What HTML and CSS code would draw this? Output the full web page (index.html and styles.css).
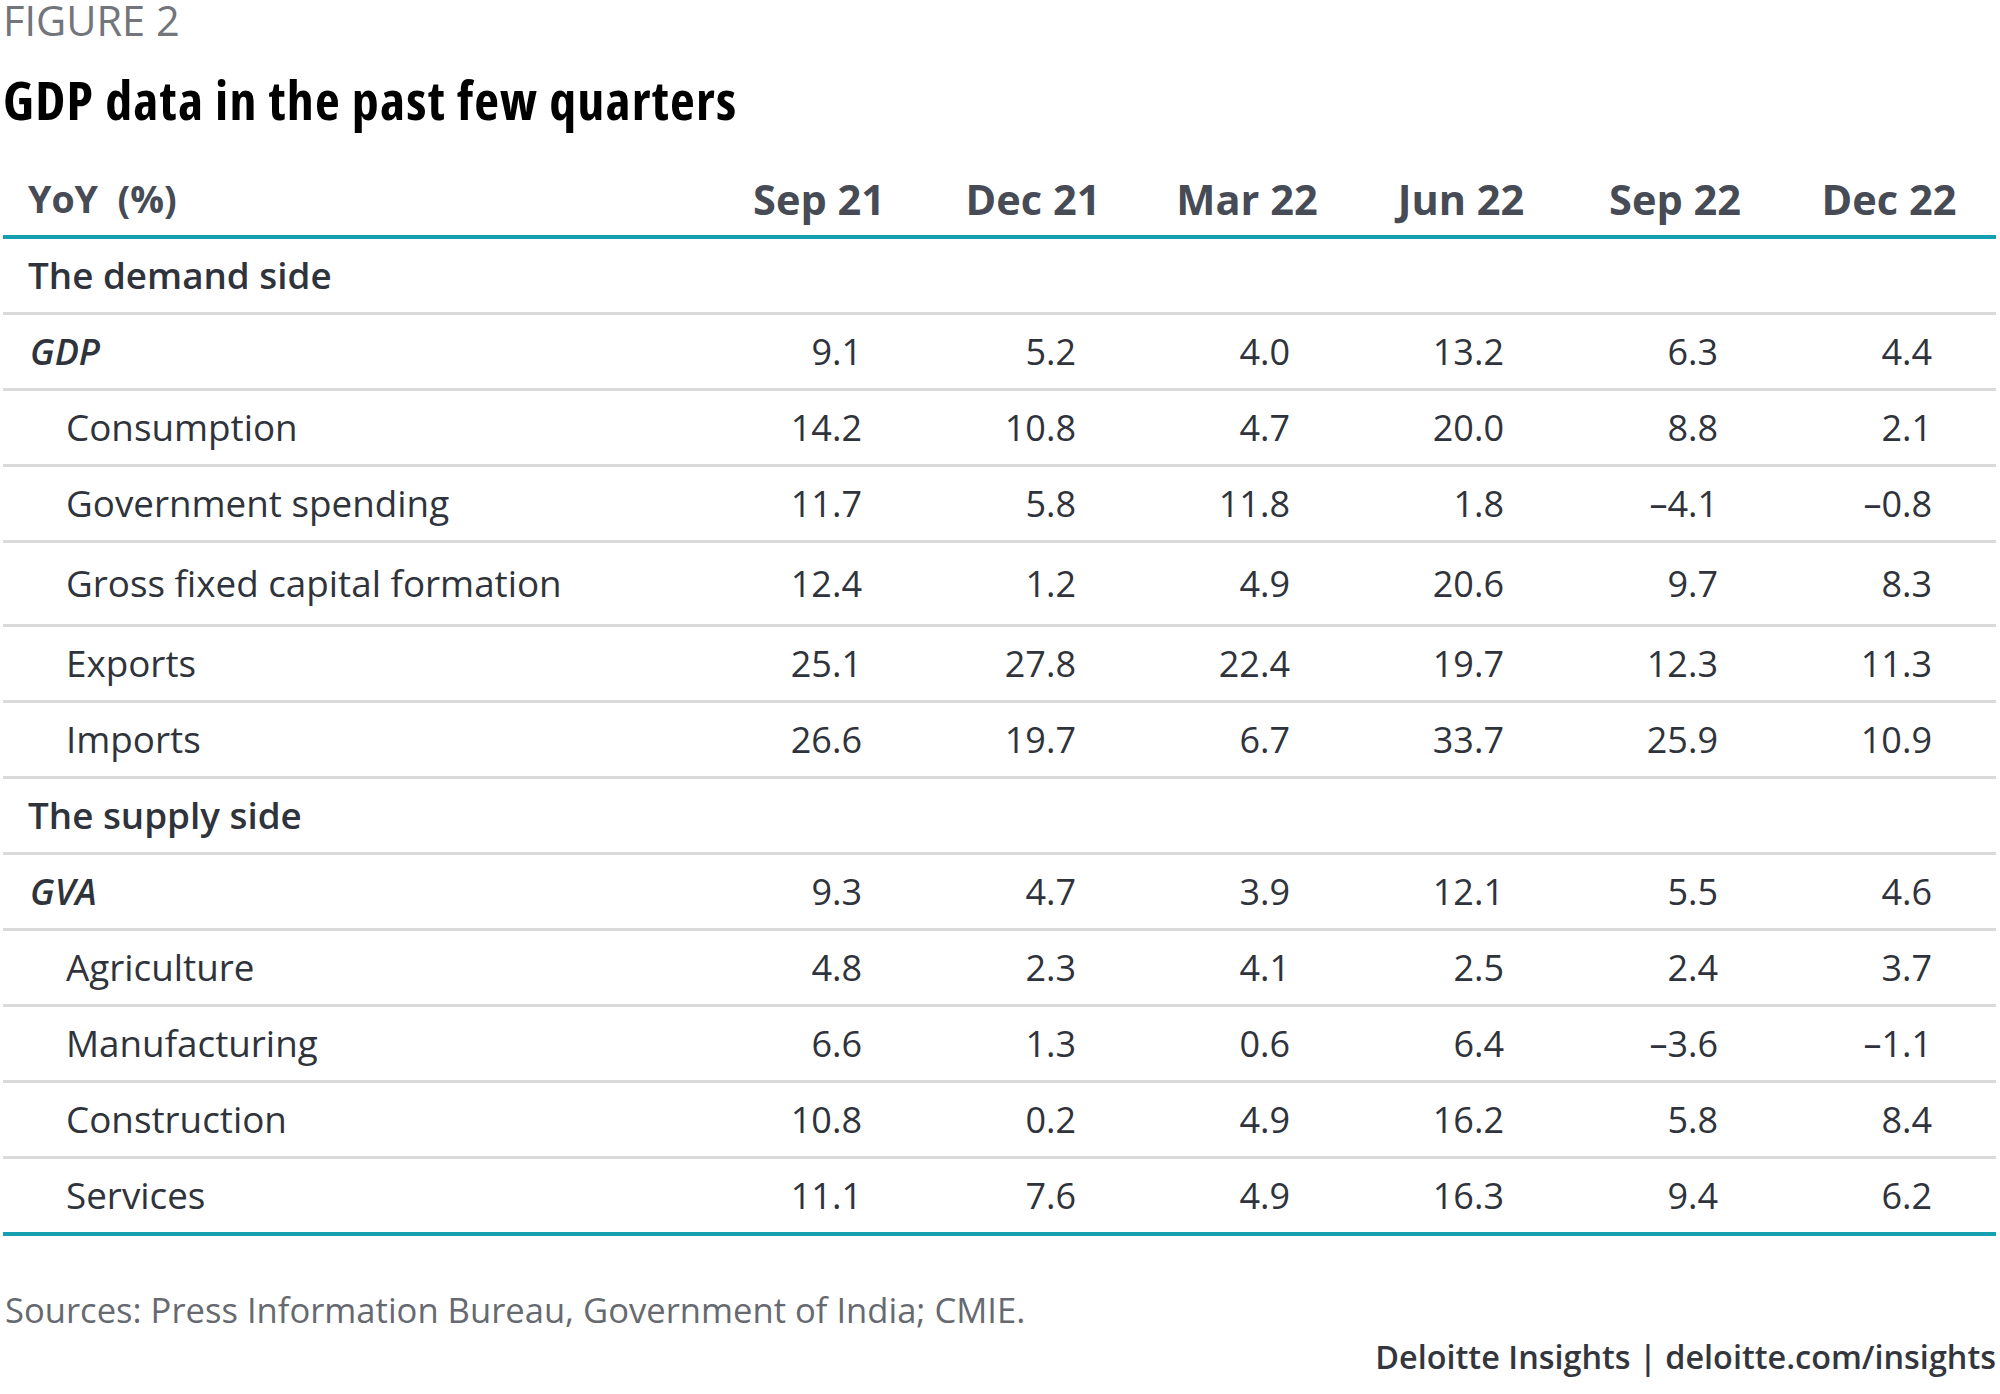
FILE: index.html
```html
<!DOCTYPE html>
<html lang="en">
<head>
<meta charset="utf-8">
<title>GDP data in the past few quarters</title>
<link rel="stylesheet" href="styles.css">
</head>
<body>
<div class="figure">
  <div class="fig-label">FIGURE 2</div>
  <h1 class="fig-title">GDP data in the past few quarters</h1>
  <table class="data">
    <thead>
      <tr>
        <th class="lbl">YoY&nbsp;&nbsp;(%)</th>
        <th>Sep 21</th><th>Dec 21</th><th>Mar 22</th><th>Jun 22</th><th>Sep 22</th><th>Dec 22</th>
      </tr>
    </thead>
    <tbody>
      <tr class="section"><td class="lbl" colspan="7">The demand side</td></tr>
      <tr class="total"><td class="lbl">GDP</td><td>9.1</td><td>5.2</td><td>4.0</td><td>13.2</td><td>6.3</td><td>4.4</td></tr>
      <tr class="sub"><td class="lbl">Consumption</td><td>14.2</td><td>10.8</td><td>4.7</td><td>20.0</td><td>8.8</td><td>2.1</td></tr>
      <tr class="sub"><td class="lbl">Government spending</td><td>11.7</td><td>5.8</td><td>11.8</td><td>1.8</td><td>–4.1</td><td>–0.8</td></tr>
      <tr class="sub tall"><td class="lbl">Gross fixed capital formation</td><td>12.4</td><td>1.2</td><td>4.9</td><td>20.6</td><td>9.7</td><td>8.3</td></tr>
      <tr class="sub"><td class="lbl">Exports</td><td>25.1</td><td>27.8</td><td>22.4</td><td>19.7</td><td>12.3</td><td>11.3</td></tr>
      <tr class="sub"><td class="lbl">Imports</td><td>26.6</td><td>19.7</td><td>6.7</td><td>33.7</td><td>25.9</td><td>10.9</td></tr>
      <tr class="section"><td class="lbl" colspan="7">The supply side</td></tr>
      <tr class="total"><td class="lbl">GVA</td><td>9.3</td><td>4.7</td><td>3.9</td><td>12.1</td><td>5.5</td><td>4.6</td></tr>
      <tr class="sub"><td class="lbl">Agriculture</td><td>4.8</td><td>2.3</td><td>4.1</td><td>2.5</td><td>2.4</td><td>3.7</td></tr>
      <tr class="sub"><td class="lbl">Manufacturing</td><td>6.6</td><td>1.3</td><td>0.6</td><td>6.4</td><td>–3.6</td><td>–1.1</td></tr>
      <tr class="sub"><td class="lbl">Construction</td><td>10.8</td><td>0.2</td><td>4.9</td><td>16.2</td><td>5.8</td><td>8.4</td></tr>
      <tr class="sub last"><td class="lbl">Services</td><td>11.1</td><td>7.6</td><td>4.9</td><td>16.3</td><td>9.4</td><td>6.2</td></tr>
    </tbody>
  </table>
  <p class="sources">Sources: Press Information Bureau, Government of India; CMIE.</p>
  <p class="credit">Deloitte Insights | deloitte.com/insights</p>
</div>
</body>
</html>
```

FILE: styles.css
```css
html, body {
  margin: 0;
  padding: 0;
  background: #ffffff;
}

body {
  font-family: "Open Sans", "Noto Sans", sans-serif;
  color: #2f333b;
}

.figure {
  width: 1993px;
  padding-left: 3px;
}

.fig-label {
  font-size: 41.5px;
  font-weight: 400;
  line-height: 40px;
  color: #72757a;
}

.fig-title {
  margin: 29px 0 0 0;
  font-size: 54px;
  font-weight: 700;
  font-stretch: 75%;
  letter-spacing: 1.2px;
  line-height: 60px;
  color: #000000;
}

.data {
  width: 1993px;
  border-collapse: collapse;
  table-layout: fixed;
}

.data th,
.data td {
  padding: 0 64px 0 0;
  text-align: right;
  white-space: nowrap;
}

.data th {
  width: 214px;
  height: 108px;
  box-sizing: border-box;
  padding: 0 0 9px 0;
  vertical-align: bottom;
  text-align: center;
  font-size: 41.5px;
  font-weight: 700;
  line-height: 54px;
  color: #464b55;
  border-bottom: 4px solid #14a0b0;
}

.data th.lbl {
  width: auto;
  text-align: left;
  padding-left: 25px;
  font-size: 37.5px;
}

.data td {
  font-size: 36px;
  line-height: 49px;
  height: 73px;
  vertical-align: middle;
  border-bottom: 3px solid #dadada;
  color: #2f333b;
}

.data td.lbl {
  text-align: left;
  padding: 0;
  font-size: 36.8px;
}

.section td.lbl {
  padding-left: 25px;
  font-weight: 600;
}

.total td.lbl {
  padding-left: 27px;
  font-weight: 600;
  font-style: italic;
  font-size: 36px;
}

.sub td.lbl {
  padding-left: 63px;
}

.tall td {
  height: 81px;
}

.last td {
  border-bottom: 4px solid #14a0b0;
}

.sources {
  margin: 51px 0 0 2px;
  font-size: 34.6px;
  line-height: 46px;
  color: #666a70;
}

.credit {
  margin: 0;
  text-align: right;
  font-size: 32.4px;
  font-weight: 600;
  line-height: 46px;
  color: #33363d;
}
```
